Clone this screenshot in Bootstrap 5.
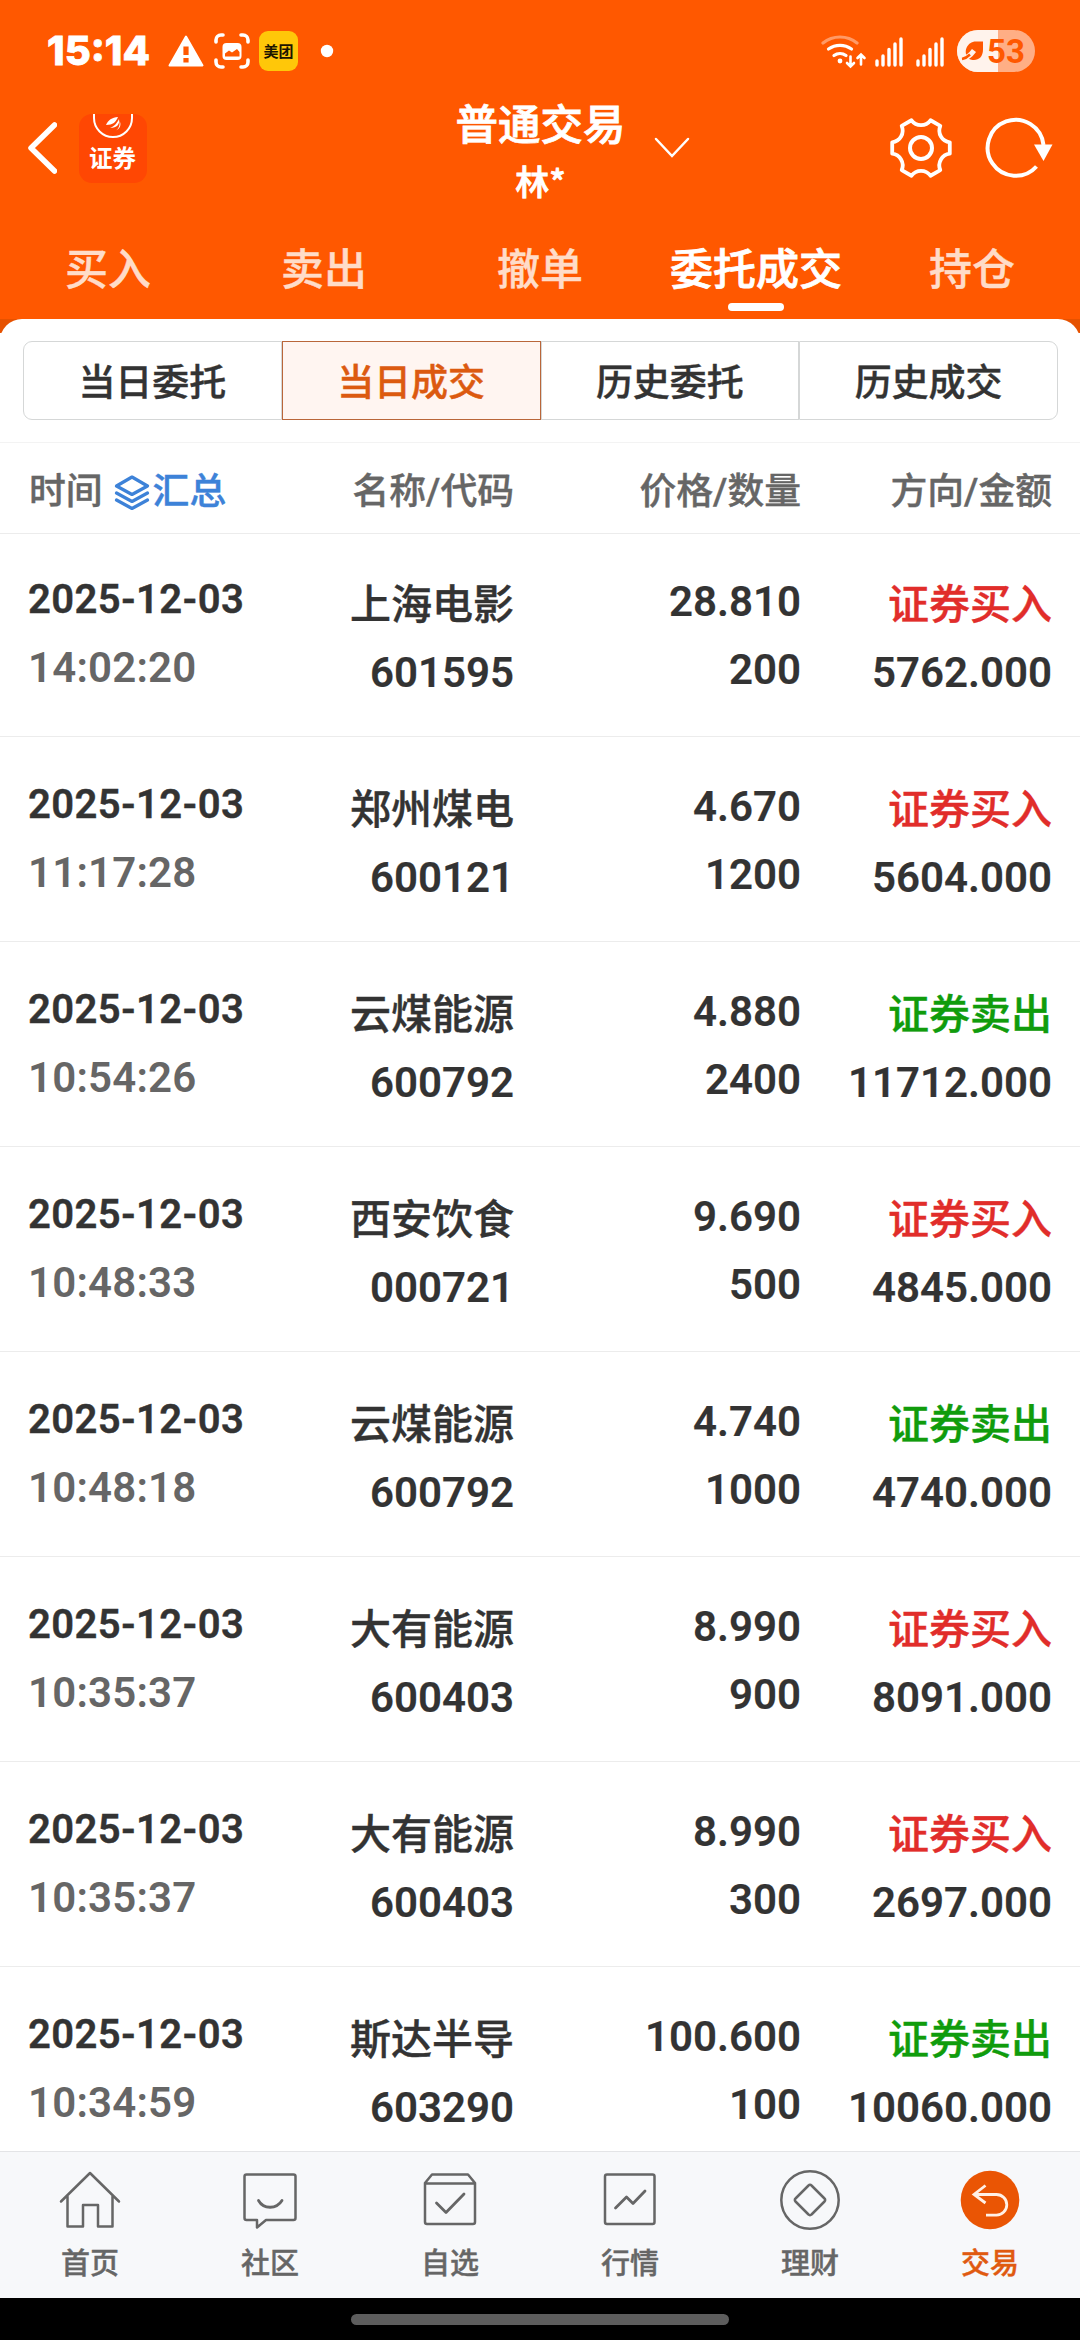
<!DOCTYPE html>
<html lang="zh-CN">
<head>
<meta charset="utf-8">
<meta name="viewport" content="width=device-width, initial-scale=1">
<title>委托成交</title>
<link href="https://cdn.jsdelivr.net/npm/bootstrap@5.3.0/dist/css/bootstrap.min.css" rel="stylesheet">
<style>
:root{--brand:#ff5800;--ink:#333;--dim:#666}
body{font-family:Roboto,"Noto Sans CJK SC",sans-serif;color:var(--ink);background:#fff;font-weight:500}
svg{display:block;flex:none}
.cjk{font-family:"Noto Sans CJK SC",sans-serif}
.acct,.tabs,.seg,.thead-line,.label,.tabbar a{-webkit-text-stroke:.4px currentColor}
.acct{-webkit-text-stroke-width:.8px}
.app{width:1080px;height:2340px}
.head{background:var(--brand);color:#fff;height:319px}
.status{height:102px;padding:0 45px 0 47px}
.clock{font:800 40px/40px Inter,sans-serif;width:121px;letter-spacing:0;-webkit-text-stroke:.8px #fff}
.titlebar{height:116px;padding:0 27px 0 28px}
.side-l{width:340px;gap:22px;height:92px}
.side-r{width:340px;gap:34px;height:92px}
.chev{margin-left:-59px}
.acct{font-size:42.5px;line-height:56px;margin-top:-8px}
.acct small{display:block;font-size:34px;line-height:44px;padding-top:9px;font-weight:500}
.tabs{height:101px}
.tabs .nav-link{width:216px;padding:0;color:#ffdcc8;font-size:43px;line-height:62px;padding-top:17px}
.tabs .nav-link.active{color:#fff;-webkit-text-stroke-width:.8px}
.tabs .nav-link.active::after{content:"";display:block;width:56px;height:8px;border-radius:4px;background:#fff;margin:6px auto 0}
.under{background:linear-gradient(#e65200 14px,#fff 14px)}
.panel{background:#fff;border-radius:22px 22px 0 0}
.seg{padding:22px 22px 22px 23px;height:124px;border-bottom:1px solid #f3f3f3}
.seg .btn{height:79px;border:1px solid #d5d7d7;border-radius:0;color:var(--ink);font-size:37px;line-height:77px;padding:0;font-weight:500;width:25%}
.seg .btn:first-child{border-radius:9px 0 0 9px}
.seg .btn:last-child{border-radius:0 9px 9px 0}
.seg .btn.active{background:#fff5f1;border-color:#b9663a;color:#dc5a10}
.cols{padding:0 28px 0 29px}
.c1{width:240px;white-space:nowrap}.c2{width:245px}.c3{width:287px}.c4{width:251px}
.thead-line{height:91px;border-bottom:1px solid #ececec;color:var(--dim);font-size:36.8px;line-height:54px;padding-top:22px}
.blue{color:#3d82d8}
.trade{height:205px;border-bottom:1px solid #ececec;font-size:42px;line-height:68px;flex:none;font-weight:600}
.trade:first-child{height:203px}
.trade:first-child>div{margin-top:-2px}
.trade .c1{padding-top:34px;margin-left:-1px;margin-right:1px}
.trade .c1 div:first-child{font-size:40px;letter-spacing:.4px;-webkit-text-stroke:.4px currentColor}
.trade .c1 div:last-child{color:var(--dim);letter-spacing:.2px}
.trade .c2,.trade .c4{padding-top:39px}
.trade .c3{padding-top:36px}
.num{letter-spacing:0;-webkit-text-stroke:.2px currentColor}
.label{font-size:41px;font-weight:500}
.buy{color:#e12d2a}.sell{color:#109c0c}
.tabbar{height:147px;background:#f7f8fa;border-top:1px solid #e3e4e6;color:var(--dim)}
.tabbar a{width:180px;color:inherit;text-decoration:none;font-size:29px;line-height:40px;padding-top:17px}
.tabbar a.on{color:#e05a10}
.tabbar svg{margin:0 auto 10px}
.home{height:42px;background:#000}
.home i{width:378px;height:11px;border-radius:6px;background:#5d5d5d}
.ico{fill:none;stroke:#666;stroke-width:2.500;stroke-linejoin:round;stroke-linecap:round}
</style>
</head>
<body>
<div class="app d-flex flex-column overflow-hidden">
<header class="head flex-shrink-0">
  <div class="status d-flex align-items-center">
    <div class="clock">15:14</div>
    <svg width="36" height="32" viewBox="0 0 36 32"><path d="M18 1.5 34.5 30.5H1.5Z" fill="#fff" stroke="#fff" stroke-width="2" stroke-linejoin="round"/><path d="M15.4 11.500h5.200v8.500h-5.200zM15.400 23h5.200v4.500h-5.200z" fill="#ff5800"/></svg>
    <svg class="me-2" style="margin-left:9px" width="38" height="38" viewBox="0 0 38 38"><g fill="none" stroke="#fff" stroke-width="3.600" stroke-linecap="round"><path d="M3 10V8a5 5 0 0 1 5-5h2M28 3h2a5 5 0 0 1 5 5v2M35 28v2a5 5 0 0 1-5 5h-2M10 35H8a5 5 0 0 1-5-5v-2"/></g><rect x="9.500" y="11" width="19" height="17" rx="4" fill="#fff"/><path d="M12 24.500v-3l4-3 3 2 5-3.500 2.500 3v4.500z" fill="#ff5800"/></svg>
    <svg width="39" height="40" viewBox="0 0 39 40"><rect width="39" height="40" rx="9" fill="#ffc709"/><text x="19.500" y="25.500" text-anchor="middle" font-family="Noto Sans CJK SC" font-weight="700" font-size="15" fill="#1c1500">美团</text></svg>
    <svg style="margin-left:22px" width="14" height="14"><circle cx="7" cy="7" r="6.200" fill="#fff"/></svg>
    <svg class="ms-auto" width="46" height="36" viewBox="0 0 46 36"><g fill="none" stroke="#fff" stroke-width="3.200" stroke-linecap="round"><path d="M2 10a27 27 0 0 1 34 0" opacity=".4"/><path d="M7.500 16a20 20 0 0 1 23 0M13 22.500a10 10 0 0 1 12 0"/><path d="M29.500 23.500V33M26 30l3.500 3.500L33 30M40 31.500V21.500M36.500 25l3.500-3.500 3.500 3.500" stroke-width="2.600"/></g><circle cx="19" cy="28" r="2.400" fill="#fff"/></svg>
    <svg style="margin-left:8px" width="28" height="32" viewBox="0 0 28 32"><path d="M2 30v-4M8 30v-9M14 30V14.500M20 30V9M26 30V4" stroke="#fff" stroke-width="3.400" stroke-linecap="round"/></svg>
    <svg style="margin-left:13px" width="28" height="32" viewBox="0 0 28 32"><path d="M2 30v-4M8 30v-9M14 30V14.500M20 30V9M26 30V4" stroke="#fff" stroke-width="3.400" stroke-linecap="round"/></svg>
    <svg style="margin-left:13px" width="78" height="42" viewBox="0 0 78 42"><rect width="78" height="42" rx="21" fill="#ffae85"/><path d="M41 0H21a21 21 0 0 0 0 42h20z" fill="#fff3ec"/><path d="M26 11.500v8c0 7-4 10.500-9 10.500-4 0-5-1-6-2.200C6 22 10 11.500 19 11.500z" fill="#ff5800"/><path d="M17 20.500C13 26 10 28 5.500 29" fill="none" stroke="#fff3ec" stroke-width="5"/><path d="M13 24.500C10 27.500 8 28.500 5 29" fill="none" stroke="#ff5800" stroke-width="2.500"/><text x="49" y="33" text-anchor="middle" font-family="Roboto" font-weight="700" font-size="33" fill="#ff5800">53</text></svg>
  </div>
  <div class="titlebar d-flex justify-content-between">
    <div class="side-l d-flex align-items-center">
      <svg width="29" height="52" viewBox="0 0 29 52"><path d="M26.500 3 3 26l23.500 23" fill="none" stroke="#fff" stroke-width="5.500" stroke-linecap="round" stroke-linejoin="round"/></svg>
      <svg width="68" height="69" viewBox="0 0 68 69"><rect width="68" height="69" rx="13" fill="#ff4703"/><path d="M15 0v4a19 19 0 0 0 38 0V0" fill="none" stroke="#fff" stroke-width="2"/><path d="M27 11C29 6 33 3.500 39 3c-2 5-5 8-12 8zM31 14c5-2 7-5 9-9 1 5-2 9-9 9zM36 17c4-2 5-6 4.500-10 2 3 1 8-4.500 10z" fill="#fff"/><text x="33.500" y="52.500" text-anchor="middle" font-family="Noto Sans CJK SC" font-weight="700" font-size="23.500" fill="#fff">证券</text></svg>
    </div>
    <div class="acct text-center cjk"><div>普通交易</div><small>林*</small></div>
    <div class="side-r d-flex align-items-center">
      <svg class="chev" width="36" height="22" viewBox="0 0 36 22"><path d="M2 2l16 17L34 2" fill="none" stroke="#fff" stroke-width="2.500" stroke-linecap="round"/></svg>
      <svg class="ms-auto" width="64" height="64" viewBox="-32 -32 64 64"><g fill="none" stroke="#fff" stroke-width="4" stroke-linejoin="round"><path transform="scale(.95)" d="M30.300-6V6A12.400 12.400 0 0 0 20.300 23.200L10 29.200A12.400 12.400 0 0 0-10 29.200L-20.300 23.200A12.400 12.400 0 0 0-30.300 6V-6A12.400 12.400 0 0 0-20.300-23.200L-10-29.200A12.400 12.400 0 0 0 10-29.200L20.300-23.200A12.400 12.400 0 0 0 30.300-6Z"/><circle r="11"/></g></svg>
      <svg style="margin-left:-2px" width="68" height="62" viewBox="0 0 68 62"><path d="M58.500 28A28 28 0 1 0 51.500 49.500" fill="none" stroke="#fff" stroke-width="4"/><path d="M49 27.500h18.500L58.500 44z" fill="#fff"/></svg>
    </div>
  </div>
  <nav class="tabs nav flex-nowrap text-center cjk">
    <a class="nav-link">买入</a><a class="nav-link">卖出</a><a class="nav-link">撤单</a><a class="nav-link active">委托成交</a><a class="nav-link">持仓</a>
  </nav>
</header>
<div class="under flex-shrink-0">
  <div class="panel">
    <div class="seg d-flex cjk"><a class="btn">当日委托</a><a class="btn active">当日成交</a><a class="btn">历史委托</a><a class="btn">历史成交</a></div>
    <div class="thead-line cols d-flex">
      <div class="c1 d-flex"><span>时间</span>
        <svg style="margin:10px 3px 0 11px" width="36" height="36" viewBox="0 0 36 36"><g fill="none" stroke="#3d82d8" stroke-width="3.200" stroke-linejoin="round" stroke-linecap="round"><path d="M18 2 33.500 11 18 19.500 2.500 11zM2.500 18 18 26.500 33.500 18M2.500 25 18 33.500 33.500 25"/></g></svg>
        <span class="blue">汇总</span></div>
      <div class="c2 text-end">名称/代码</div><div class="c3 text-end">价格/数量</div><div class="c4 text-end">方向/金额</div>
    </div>
  </div>
</div>
<main class="flex-grow-1 overflow-hidden d-flex flex-column" id="list" style="min-height:0"></main>
<nav class="tabbar d-flex text-center flex-shrink-0 cjk">
  <a><svg class="ico" width="62" height="62" viewBox="0 0 62 62"><path d="M2 32.500 31 4 60 32.500M8.500 27.500V57.500H24V36H39V57.500H53.500V27.500"/></svg>首页</a>
  <a><svg class="ico" width="62" height="62" viewBox="0 0 62 62"><path d="M7.500 5.500h47a2 2 0 0 1 2 2v41.500a2 2 0 0 1-2 2H27L18 58.500V51H7.500a2 2 0 0 1-2-2V7.500a2 2 0 0 1 2-2z"/><path d="M19.500 31.500c5 9 18 9 23.500 0" stroke-width="2.800"/></svg>社区</a>
  <a><svg class="ico" width="62" height="62" viewBox="0 0 62 62"><path d="M13 5.500H49L56 14V53a2 2 0 0 1-2 2H8a2 2 0 0 1-2-2V14zM6 14.500H56"/><path d="M17.500 34l9.500 9.500L45 25" stroke-width="2.800"/></svg>自选</a>
  <a><svg class="ico" width="62" height="62" viewBox="0 0 62 62"><rect x="6" y="5.500" width="49.500" height="49.500" rx="2"/><path d="M16.500 39 27.500 28 34 34.500 46 22" stroke-width="2.800"/></svg>行情</a>
  <a><svg class="ico" width="62" height="62" viewBox="0 0 62 62"><circle cx="31" cy="31" r="28.700"/><path d="M29.500 16.500a2 2 0 0 1 3 0L45.500 29.500a2 2 0 0 1 0 3L32.500 45.500a2 2 0 0 1-3 0L16.500 32.500a2 2 0 0 1 0-3z"/></svg>理财</a>
  <a class="on"><svg width="62" height="62" viewBox="0 0 62 62"><circle cx="31" cy="31" r="29.300" fill="#ea5504"/><path d="M26.500 16.500 15 25.500 26.500 34M15 25.500H37.500a10.300 10.300 0 0 1 0 20.600H27" fill="none" stroke="#fff0e6" stroke-width="2.800"/></svg>交易</a>
</nav>
<footer class="home d-flex justify-content-center align-items-center flex-shrink-0"><i></i></footer>
</div>
<script src="https://cdn.jsdelivr.net/npm/bootstrap@5.3.0/dist/js/bootstrap.bundle.min.js"></script>
<script>
const trades=[
["14:02:20","上海电影","601595","28.810","200",1,"5762.000"],
["11:17:28","郑州煤电","600121","4.670","1200",1,"5604.000"],
["10:54:26","云煤能源","600792","4.880","2400",0,"11712.000"],
["10:48:33","西安饮食","000721","9.690","500",1,"4845.000"],
["10:48:18","云煤能源","600792","4.740","1000",0,"4740.000"],
["10:35:37","大有能源","600403","8.990","900",1,"8091.000"],
["10:35:37","大有能源","600403","8.990","300",1,"2697.000"],
["10:34:59","斯达半导","603290","100.600","100",0,"10060.000"]];
document.getElementById("list").innerHTML=trades.map(([t,n,c,p,q,b,a])=>`
<div class="trade cols d-flex">
<div class="c1"><div>2025-12-03</div><div>${t}</div></div>
<div class="c2 text-end num"><div class="label">${n}</div><div>${c}</div></div>
<div class="c3 text-end num"><div>${p}</div><div>${q}</div></div>
<div class="c4 text-end num"><div class="label ${b?"buy":"sell"}">${b?"证券买入":"证券卖出"}</div><div>${a}</div></div>
</div>`).join("");
</script>
</body>
</html>
